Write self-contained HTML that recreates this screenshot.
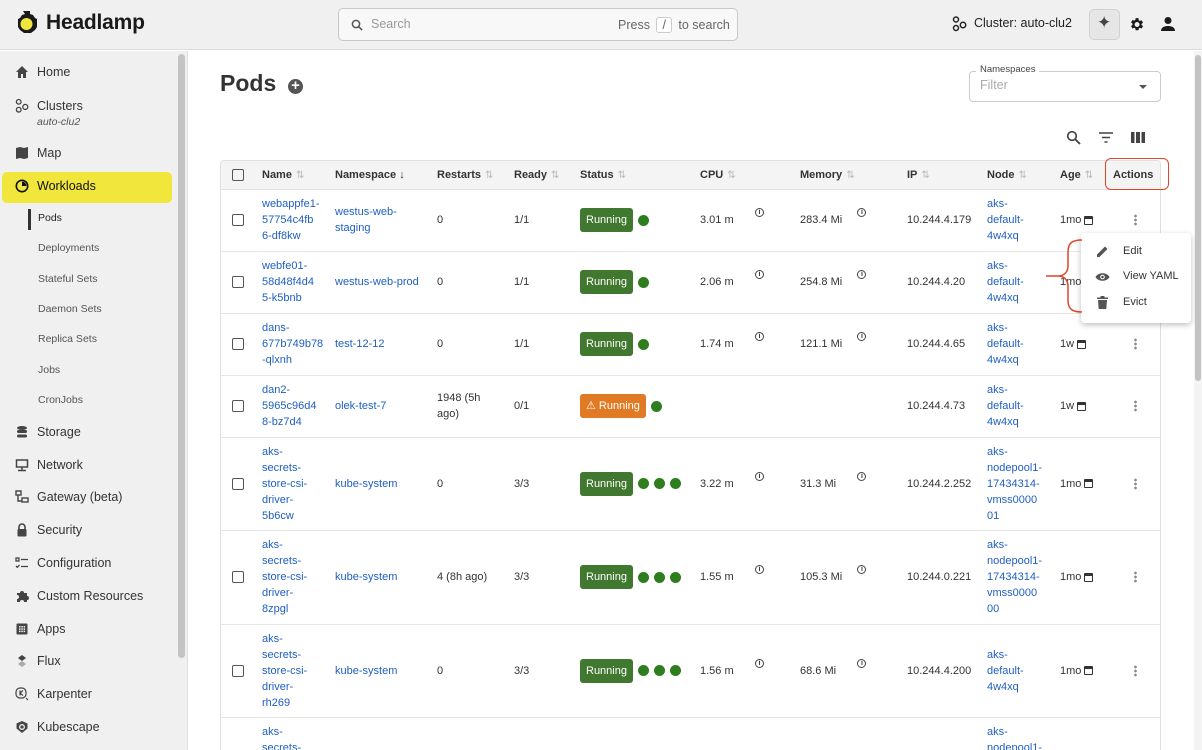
<!DOCTYPE html>
<html><head><meta charset="utf-8">
<style>
*{box-sizing:border-box;margin:0;padding:0}
html,body{width:1202px;height:750px;overflow:hidden}
body{font-family:"Liberation Sans",sans-serif;background:#fff;position:relative;color:#222}
.hdr{position:absolute;left:0;top:0;width:1202px;height:50px;background:#f0f0f0;border-bottom:1px solid #dcdcdc}
.logo{position:absolute;left:15px;top:10px;display:flex;align-items:center}
.logo span{font-size:21px;font-weight:bold;margin-left:8px;color:#1a1a1a;letter-spacing:-0.2px}
.search{position:absolute;left:338px;top:8px;width:400px;height:33px;border:1px solid #c8c8c8;border-radius:5px;background:#f8f8f8;font-size:12.5px;color:#999}
.side{position:absolute;left:0;top:51px;width:188px;height:699px;background:#f0f0f0;border-right:1px solid #e0e0e0}
.sb{position:absolute;left:178px;top:3px;width:7px;height:604px;background:#c3c3c3;border-radius:4px}
.it{position:absolute;left:15px;display:flex;align-items:center;font-size:12.5px;color:#333}
.it svg{margin-right:8px}
.sub{position:absolute;left:38px;font-size:10.5px;color:#555}
.rs{position:absolute;left:1194px;top:51px;width:8px;height:699px;background:#f4f4f4}
.rs div{position:absolute;left:1px;top:4px;width:6px;height:326px;background:#c3c3c3;border-radius:3px}
.clip{position:absolute;left:220px;top:160px;width:941px;height:590px;overflow:hidden;border:1px solid #e0e0e0;border-bottom:none;border-radius:4px 4px 0 0}
table{position:absolute;left:0;top:0;width:940px;border-collapse:collapse;table-layout:fixed;font-size:11px}
th{height:28px;background:#f4f4f4;text-align:left;font-weight:bold;color:#333;font-size:11px;border-bottom:1px solid #e0e0e0;padding-left:12px;white-space:nowrap}
td{padding-left:12px;vertical-align:middle;border-bottom:1px solid #e6e6e6;line-height:16px;color:#333;white-space:nowrap;overflow:hidden}
tr td:first-child,tr th:first-child{padding-left:11px}
a{color:#1f5fc0;text-decoration:none}
.cb{width:12px;height:12px;border:1.6px solid #555;border-radius:2px;display:inline-block;vertical-align:middle}
.ar{color:#bbb;font-weight:normal;font-size:10px;margin-left:4px}
.run{display:inline-block;background:#41782f;color:#fff;border-radius:3px;padding:4px 6px;font-size:11px;vertical-align:middle;white-space:nowrap}
.warn{background:#e07a25}
.dot{display:inline-block;width:11px;height:11px;border-radius:50%;background:#2e7d1e;vertical-align:middle;margin-left:5px}
.i{display:inline-block;width:9px;height:9px;border:1px solid #444;border-radius:50%;font-size:7px;line-height:8px;text-align:center;font-weight:bold;vertical-align:top;margin-top:-4px}
.kb{display:inline-block;width:3px;height:12px;vertical-align:middle;background:radial-gradient(circle,#888 1.2px,transparent 1.5px) 0 0/3px 4px}
.cal{display:inline-block;width:9px;height:9px;border:1.5px solid #333;border-top-width:3px;border-radius:1px;vertical-align:middle;margin-left:3px}
</style></head><body>
<div class="hdr">
 <div class="logo"><svg width="23" height="26" viewBox="0 0 23 26"><path d="M8 1h7v3l3 1 2 3 2 1v8l-2 3-4 3-7 0-4-3-2-3V9l2-1 2-3 3-1z" fill="#1a1a1a"/><circle cx="11.5" cy="14" r="6" fill="#f0e63c"/></svg><span>Headlamp</span></div>
 <div class="search"><svg style="position:absolute;left:12px;top:10px" width="12" height="12" viewBox="0 0 12 12"><circle cx="5" cy="5" r="3.6" stroke="#555" stroke-width="1.5" fill="none"/><path d="M7.6 7.6l3.5 3.5" stroke="#555" stroke-width="1.6"/></svg><span style="position:absolute;left:32px;top:8px">Search</span><span style="position:absolute;left:279px;top:8px;color:#666">Press <span style="display:inline-block;border:1px solid #ccc;border-radius:3px;padding:0 5px;background:#fff;margin:0 3px">/</span> to search</span></div>
 <svg style="position:absolute;left:952px;top:16px" width="15" height="16" viewBox="0 0 15 16"><g fill="none" stroke="#222" stroke-width="1.5"><circle cx="4" cy="3.5" r="2.5"/><circle cx="4" cy="12" r="2.5"/><circle cx="11" cy="9" r="2.7"/></g></svg>
 <span style="position:absolute;left:974px;top:16px;font-size:12.5px;color:#222">Cluster: auto-clu2</span>
 <div style="position:absolute;left:1089px;top:9px;width:31px;height:31px;border:1px solid #d0d0d0;border-radius:5px;background:#e6e6e6"><span style="position:absolute;left:7px;top:3px;font-size:17px;color:#444">✦</span></div>
 <svg style="position:absolute;left:1128px;top:16px" width="17" height="17" viewBox="0 0 24 24"><path fill="#1a1a1a" d="M19.1 12.9a7 7 0 000-1.8l2.1-1.6-2-3.5-2.5 1a7 7 0 00-1.6-.9L14.8 3h-4l-.4 2.7a7 7 0 00-1.6.9l-2.5-1-2 3.5 2.1 1.6a7 7 0 000 1.8l-2.1 1.6 2 3.5 2.5-1c.5.4 1 .7 1.6.9l.4 2.7h4l.4-2.7c.6-.2 1.1-.5 1.6-.9l2.5 1 2-3.5zM12.8 15.5a3.5 3.5 0 110-7 3.5 3.5 0 010 7z"/></svg>
 <svg style="position:absolute;left:1160px;top:16px" width="16" height="16" viewBox="0 0 16 16"><circle cx="8" cy="4.5" r="3.5" fill="#1a1a1a"/><path d="M1 15c0-4 4-5 7-5s7 1 7 5z" fill="#1a1a1a"/></svg>
</div>
<div class="side">
 <div class="sb"></div>
 <div style="position:absolute;left:2px;top:121px;width:170px;height:31px;background:#f0e63c;border-radius:5px"></div>
 <div style="position:absolute;left:28px;top:158px;width:3px;height:21px;background:#333"></div>
</div>
<div class="it" style="top:65px"><svg width="14" height="14" viewBox="0 0 14 14"><path d="M7 1L1 7h2v6h3V9h2v4h3V7h2z" fill="#444"/></svg>Home</div>
<div class="it" style="top:98px"><svg width="14" height="16" viewBox="0 0 15 16"><g fill="none" stroke="#444" stroke-width="1.4"><circle cx="4" cy="3.5" r="2.5"/><circle cx="4" cy="12" r="2.5"/><circle cx="11" cy="9" r="2.7"/></g></svg>Clusters</div>
<div class="sub" style="top:116px;left:37px;font-style:italic;font-size:10.5px">auto-clu2</div>
<div class="it" style="top:146px"><svg width="14" height="14" viewBox="0 0 14 14"><path d="M1 2l4-1 4 1 4-1v11l-4 1-4-1-4 1z" fill="#444"/></svg>Map</div>
<div class="it" style="top:179px;color:#111"><svg width="14" height="14" viewBox="0 0 14 14"><circle cx="7" cy="7" r="5.7" fill="none" stroke="#111" stroke-width="1.6"/><path d="M7 7V2.5A4.5 4.5 0 0111.5 7z" fill="#111"/></svg>Workloads</div>
<div class="sub" style="top:212px;color:#222">Pods</div>
<div class="sub" style="top:242px">Deployments</div>
<div class="sub" style="top:273px">Stateful Sets</div>
<div class="sub" style="top:303px">Daemon Sets</div>
<div class="sub" style="top:333px">Replica Sets</div>
<div class="sub" style="top:364px">Jobs</div>
<div class="sub" style="top:394px">CronJobs</div>
<div class="it" style="top:425px"><svg width="14" height="14" viewBox="0 0 14 14"><g fill="#444"><ellipse cx="7" cy="3" rx="5" ry="2"/><rect x="2" y="5" width="10" height="3" rx="1.5"/><rect x="2" y="9.5" width="10" height="3" rx="1.5"/></g></svg>Storage</div>
<div class="it" style="top:458px"><svg width="14" height="14" viewBox="0 0 14 14"><g fill="none" stroke="#444" stroke-width="1.5"><rect x="1.5" y="2" width="11" height="7"/><path d="M7 9v3M3 12.5h8"/></g></svg>Network</div>
<div class="it" style="top:490px"><svg width="14" height="14" viewBox="0 0 14 14"><g fill="none" stroke="#444" stroke-width="1.4"><rect x="1" y="1" width="5" height="4"/><rect x="7" y="8" width="6" height="4"/><path d="M3 5v6h4"/></g></svg>Gateway (beta)</div>
<div class="it" style="top:523px"><svg width="14" height="14" viewBox="0 0 14 14"><path d="M4 6V4a3 3 0 016 0v2" stroke="#444" stroke-width="1.6" fill="none"/><rect x="2.5" y="6" width="9" height="7.5" rx="1" fill="#444"/></svg>Security</div>
<div class="it" style="top:556px"><svg width="14" height="14" viewBox="0 0 14 14"><g stroke="#444" stroke-width="1.3" fill="none"><rect x="1" y="2" width="3" height="3"/><path d="M6 3.5h7M6 10.5h7M1 10l1.3 1.3L4.5 9"/></g></svg>Configuration</div>
<div class="it" style="top:589px"><svg width="14" height="14" viewBox="0 0 14 14"><path d="M2 4h3a2 2 0 014 0h3v3a2 2 0 010 4v2H9a2 2 0 00-4 0H2v-3a2 2 0 000-4z" fill="#444"/></svg>Custom Resources</div>
<div class="it" style="top:622px"><svg width="14" height="14" viewBox="0 0 14 14"><rect x="1.5" y="1.5" width="11" height="11" rx="1" fill="#444"/><g fill="#f0f0f0"><rect x="4" y="4" width="1.5" height="1.5"/><rect x="6.3" y="4" width="1.5" height="1.5"/><rect x="8.6" y="4" width="1.5" height="1.5"/><rect x="4" y="6.3" width="1.5" height="1.5"/><rect x="6.3" y="6.3" width="1.5" height="1.5"/><rect x="8.6" y="6.3" width="1.5" height="1.5"/><rect x="4" y="8.6" width="1.5" height="1.5"/><rect x="6.3" y="8.6" width="1.5" height="1.5"/><rect x="8.6" y="8.6" width="1.5" height="1.5"/></g></svg>Apps</div>
<div class="it" style="top:654px"><svg width="14" height="14" viewBox="0 0 14 14"><path d="M7 1l4 3-4 3-4-3z" fill="#444"/><path d="M7 7l4 3-4 3-4-3z" fill="#aaa"/></svg>Flux</div>
<div class="it" style="top:687px"><svg width="14" height="14" viewBox="0 0 14 14"><g fill="none" stroke="#444" stroke-width="1.2"><rect x="1" y="1" width="10" height="10" rx="4"/><path d="M5 3.5v5M8 3.5L5 6l3 2.5M11 11l2 2"/></g></svg>Karpenter</div>
<div class="it" style="top:720px"><svg width="14" height="14" viewBox="0 0 14 14"><path d="M7 1l5.5 2.5v5L7 13 1.5 8.5v-5z" fill="#444"/><circle cx="7" cy="7" r="2.3" fill="none" stroke="#f0f0f0" stroke-width="1.3"/></svg>Kubescape</div>

<div class="rs"><div></div></div>
<div style="position:absolute;left:220px;top:70px;font-size:23px;font-weight:bold;color:#333">Pods</div>
<div style="position:absolute;left:288px;top:79px;width:15px;height:15px;border-radius:50%;background:#555;color:#fff;font-size:15px;line-height:14px;text-align:center;font-weight:bold">+</div>
<div style="position:absolute;left:969px;top:71px;width:192px;height:31px;border:1px solid #ccc;border-radius:4px"></div>
<div style="position:absolute;left:976px;top:64px;background:#fff;padding:0 4px;font-size:9.5px;color:#444">Namespaces</div>
<div style="position:absolute;left:980px;top:78px;font-size:12.5px;color:#aaa">Filter</div>
<div style="position:absolute;left:1139px;top:85px;border-left:4px solid transparent;border-right:4px solid transparent;border-top:4px solid #555"></div>
<svg style="position:absolute;left:1066px;top:130px" width="15" height="15" viewBox="0 0 15 15"><circle cx="6" cy="6" r="4.3" stroke="#444" stroke-width="1.7" fill="none"/><path d="M9 9l5 5" stroke="#444" stroke-width="1.9"/></svg>
<svg style="position:absolute;left:1099px;top:132px" width="14" height="11" viewBox="0 0 14 11"><path d="M0 1h14M3 5.5h8M5.5 10h3" stroke="#444" stroke-width="1.6"/></svg>
<svg style="position:absolute;left:1131px;top:132px" width="14" height="11" viewBox="0 0 14 11"><g fill="#444"><rect x="0" y="0" width="3.5" height="11"/><rect x="5" y="0" width="4" height="11"/><rect x="10.5" y="0" width="3.5" height="11"/></g></svg>

<div class="clip">
<table>
<colgroup><col style="width:29px"><col style="width:73px"><col style="width:102px"><col style="width:77px"><col style="width:66px"><col style="width:120px"><col style="width:100px"><col style="width:107px"><col style="width:80px"><col style="width:73px"><col style="width:56px"><col style="width:57px"></colgroup>
<tr><th><span class="cb"></span></th><th>Name<span class="ar">⇅</span></th><th>Namespace <span style="font-weight:normal">↓</span></th><th>Restarts<span class="ar">⇅</span></th><th>Ready<span class="ar">⇅</span></th><th>Status<span class="ar">⇅</span></th><th>CPU<span class="ar">⇅</span></th><th>Memory<span class="ar">⇅</span></th><th>IP<span class="ar">⇅</span></th><th>Node<span class="ar">⇅</span></th><th>Age<span class="ar">⇅</span></th><th style="padding-left:9px">Actions</th></tr>
<tr style="height:62px"><td><span class="cb"></span></td><td><a>webappfe1-<br>57754c4fb<br>6-df8kw</a></td><td><a>westus-web-<br>staging</a></td><td>0</td><td>1/1</td><td><span class="run">Running</span><span class="dot"></span></td><td>3.01 m &nbsp;&nbsp;&nbsp;&nbsp;&nbsp;&nbsp;<span class="i">i</span></td><td>283.4 Mi &nbsp;&nbsp;&nbsp;&nbsp;<span class="i">i</span></td><td>10.244.4.179</td><td><a>aks-<br>default-<br>4w4xq</a></td><td>1mo<span class="cal"></span></td><td style="padding-left:30px"><span class="kb"></span></td></tr>
<tr style="height:62px"><td><span class="cb"></span></td><td><a>webfe01-<br>58d48f4d4<br>5-k5bnb</a></td><td><a>westus-web-prod</a></td><td>0</td><td>1/1</td><td><span class="run">Running</span><span class="dot"></span></td><td>2.06 m &nbsp;&nbsp;&nbsp;&nbsp;&nbsp;&nbsp;<span class="i">i</span></td><td>254.8 Mi &nbsp;&nbsp;&nbsp;&nbsp;<span class="i">i</span></td><td>10.244.4.20</td><td><a>aks-<br>default-<br>4w4xq</a></td><td>1mo<span class="cal"></span></td><td></td></tr>
<tr style="height:62px"><td><span class="cb"></span></td><td><a>dans-<br>677b749b78<br>-qlxnh</a></td><td><a>test-12-12</a></td><td>0</td><td>1/1</td><td><span class="run">Running</span><span class="dot"></span></td><td>1.74 m &nbsp;&nbsp;&nbsp;&nbsp;&nbsp;&nbsp;<span class="i">i</span></td><td>121.1 Mi &nbsp;&nbsp;&nbsp;&nbsp;<span class="i">i</span></td><td>10.244.4.65</td><td><a>aks-<br>default-<br>4w4xq</a></td><td>1w<span class="cal"></span></td><td style="padding-left:30px"><span class="kb"></span></td></tr>
<tr style="height:62px"><td><span class="cb"></span></td><td><a>dan2-<br>5965c96d4<br>8-bz7d4</a></td><td><a>olek-test-7</a></td><td>1948 (5h<br>ago)</td><td>0/1</td><td><span class="run warn">⚠ Running</span><span class="dot"></span></td><td></td><td></td><td>10.244.4.73</td><td><a>aks-<br>default-<br>4w4xq</a></td><td>1w<span class="cal"></span></td><td style="padding-left:30px"><span class="kb"></span></td></tr>
<tr style="height:93px"><td><span class="cb"></span></td><td><a>aks-<br>secrets-<br>store-csi-<br>driver-<br>5b6cw</a></td><td><a>kube-system</a></td><td>0</td><td>3/3</td><td><span class="run">Running</span><span class="dot"></span><span class="dot"></span><span class="dot"></span></td><td>3.22 m &nbsp;&nbsp;&nbsp;&nbsp;&nbsp;&nbsp;<span class="i">i</span></td><td>31.3 Mi &nbsp;&nbsp;&nbsp;&nbsp;&nbsp;&nbsp;<span class="i">i</span></td><td>10.244.2.252</td><td><a>aks-<br>nodepool1-<br>17434314-<br>vmss0000<br>01</a></td><td>1mo<span class="cal"></span></td><td style="padding-left:30px"><span class="kb"></span></td></tr>
<tr style="height:94px"><td><span class="cb"></span></td><td><a>aks-<br>secrets-<br>store-csi-<br>driver-<br>8zpgl</a></td><td><a>kube-system</a></td><td>4 (8h ago)</td><td>3/3</td><td><span class="run">Running</span><span class="dot"></span><span class="dot"></span><span class="dot"></span></td><td>1.55 m &nbsp;&nbsp;&nbsp;&nbsp;&nbsp;&nbsp;<span class="i">i</span></td><td>105.3 Mi &nbsp;&nbsp;&nbsp;&nbsp;<span class="i">i</span></td><td>10.244.0.221</td><td><a>aks-<br>nodepool1-<br>17434314-<br>vmss0000<br>00</a></td><td>1mo<span class="cal"></span></td><td style="padding-left:30px"><span class="kb"></span></td></tr>
<tr style="height:93px"><td><span class="cb"></span></td><td><a>aks-<br>secrets-<br>store-csi-<br>driver-<br>rh269</a></td><td><a>kube-system</a></td><td>0</td><td>3/3</td><td><span class="run">Running</span><span class="dot"></span><span class="dot"></span><span class="dot"></span></td><td>1.56 m &nbsp;&nbsp;&nbsp;&nbsp;&nbsp;&nbsp;<span class="i">i</span></td><td>68.6 Mi &nbsp;&nbsp;&nbsp;&nbsp;&nbsp;&nbsp;<span class="i">i</span></td><td>10.244.4.200</td><td><a>aks-<br>default-<br>4w4xq</a></td><td>1mo<span class="cal"></span></td><td style="padding-left:30px"><span class="kb"></span></td></tr>
<tr style="height:93px"><td></td><td style="vertical-align:top;padding-top:6px"><a>aks-<br>secrets-</a></td><td></td><td></td><td></td><td></td><td></td><td></td><td></td><td style="vertical-align:top;padding-top:6px"><a>aks-<br>nodepool1-</a></td><td></td><td></td></tr>
</table>
</div>
<div style="position:absolute;left:1105px;top:158px;width:64px;height:32px;border:1.5px solid #e0452a;border-radius:6px"></div>
<div style="position:absolute;left:1081px;top:233px;width:110px;height:90px;background:#fff;border-radius:4px;box-shadow:0 2px 6px rgba(0,0,0,.25);font-size:11px;color:#333">
 <svg style="position:absolute;left:15px;top:12px" width="13" height="13" viewBox="0 0 13 13"><path d="M1 12V9.5L9 1.5l2.5 2.5-8 8z" fill="#555"/></svg><span style="position:absolute;left:42px;top:12px">Edit</span>
 <svg style="position:absolute;left:14px;top:39px" width="15" height="10" viewBox="0 0 15 10"><path d="M0.5 5C3 0 12 0 14.5 5 12 10 3 10 .5 5z" fill="#555"/><circle cx="7.5" cy="5" r="2.3" fill="#fff"/><circle cx="7.5" cy="5" r="1.3" fill="#555"/></svg><span style="position:absolute;left:42px;top:37px">View YAML</span>
 <svg style="position:absolute;left:16px;top:63px" width="11" height="13" viewBox="0 0 11 13"><path d="M0 1.5h11v1.5H0zM3.5 0h4v1.5h-4zM1 4h9l-.7 9H1.7z" fill="#555"/></svg><span style="position:absolute;left:42px;top:63px">Evict</span>
</div>
<svg style="position:absolute;left:1044px;top:238px" width="40" height="76" viewBox="0 0 40 76"><path d="M38 2C28 2 24 5 24 14v14c0 6-4 10-10 10H2M14 38c6 0 10 4 10 10v14c0 9 4 12 14 12" fill="none" stroke="#e0452a" stroke-width="1.5"/></svg>
</body></html>
